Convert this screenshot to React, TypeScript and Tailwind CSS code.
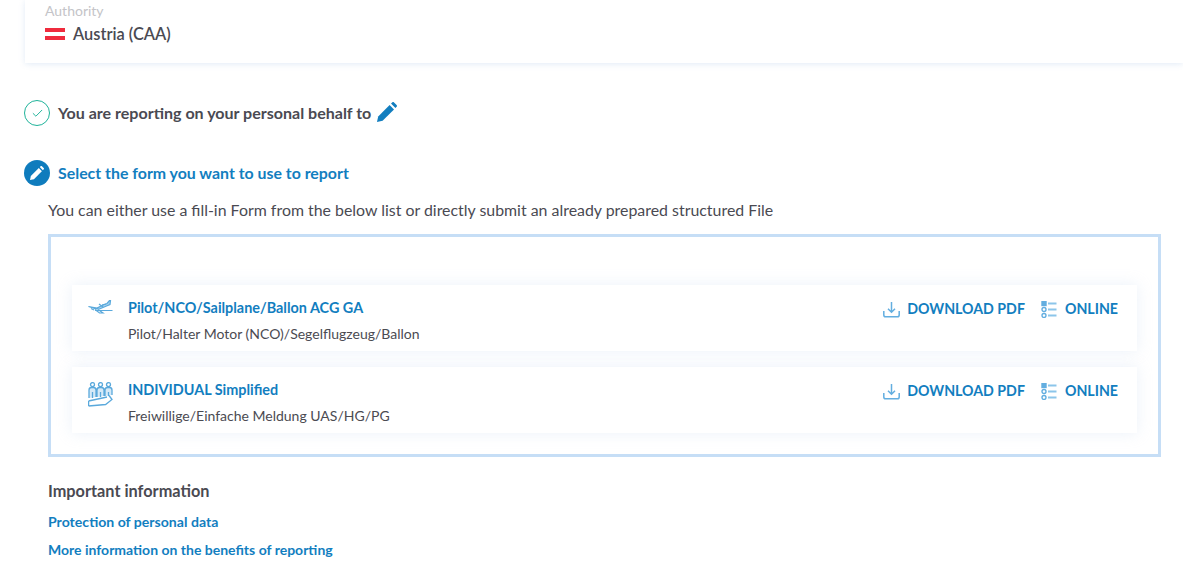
import { Check } from 'lucide-react';
import type { ReactNode } from 'react';

const lato = "font-['Lato',sans-serif]";

function PenSolid({ className }: { className: string }) {
  return (
    <svg className={className} viewBox="0 0 20 20" fill="currentColor">
      <path d="M0 20l1.2-5.6L12.6 3l4.4 4.4L5.6 18.8 0 20z" />
      <path d="M14 1.6L15.2.4c.5-.5 1.3-.5 1.8 0l2.6 2.6c.5.5.5 1.3 0 1.8L18.4 6 14 1.6z" />
    </svg>
  );
}

function PlaneIcon() {
  return (
    <svg className="h-[14px] w-[25px] text-[#5aa9dc]" viewBox="0 0 25 14" fill="none" stroke="currentColor" strokeWidth="1.2">
      <path d="M0.5 6.5l8.5 1.5 6-3 4-1.5 2.5-3h1l-.5 4-3.5 1.5-7 3H8z" fill="#a8d3ef" />
      <path d="M11 4l4 3 M10 9.5l5 3.5h-3.5L7 9.5 M7 10.5h17.5 M14 5l4-1" />
      <path d="M3 8.5l3 1.5" />
    </svg>
  );
}

function PeopleIcon() {
  return (
    <svg className="h-[25px] w-[25px] text-[#5aa9dc]" viewBox="0 0 25 25" fill="none" stroke="currentColor" strokeWidth="1.3">
      <circle cx="4.500" cy="2.600" r="2" />
      <circle cx="12.500" cy="2.600" r="2" />
      <circle cx="20.500" cy="2.600" r="2" />
      <path d="M1 16V8q0-2.500 2.500-2.500h2Q8 5.500 8 8v7 M9 15V8q0-2.500 2.500-2.500h2Q16 5.500 16 8v6 M17 14V8q0-2.500 2.500-2.500h2Q24 5.500 24 8v5" fill="#d5e9f7" />
      <path d="M4.500 10v6 M12.500 10v5 M20.500 10v4" />
      <path d="M.6 19l18.400-4 M.6 24l17-1.500 6.400-5-3-4 M.6 19v5" />
    </svg>
  );
}

function DownloadIcon() {
  return (
    <svg className="h-[17px] w-[17px] text-[#63aee0]" viewBox="0 0 17 17" fill="none" stroke="currentColor" strokeWidth="1.5">
      <path d="M8.500 1v10 M5 7.800l3.500 3.500L12 7.800" />
      <path d="M.8 10v4q0 1.800 1.800 1.800h11.800q1.800 0 1.800-1.800v-4" />
    </svg>
  );
}

function ListIcon() {
  return (
    <svg className="h-[17px] w-[16px] text-[#63aee0]" viewBox="0 0 16 17" fill="none" stroke="currentColor" strokeWidth="1.4">
      <rect x="1" y="0.500" width="4" height="4" fill="currentColor" />
      <circle cx="3" cy="8.500" r="2" />
      <circle cx="3" cy="14.500" r="2" />
      <path d="M7 2.500h8.500 M7 8.500h8.500 M7 14.500h8.500" stroke="#8cc5ea" strokeWidth="1.800" />
    </svg>
  );
}

function FormCard({ icon, title, sub }: { icon: ReactNode; title: string; sub: string }) {
  return (
    <div className="flex h-[66px] bg-white shadow-[0_0_14px_rgba(190,210,235,0.3)]">
      <div className="flex w-[56px] shrink-0 justify-center pt-[15px] pl-[1px]">{icon}</div>
      <div className="flex-1 pt-[14px]">
        <p className="text-[14.4px] leading-[18px] font-bold text-[#127ebf]">{title}</p>
        <p className="mt-[8px] text-[14px] leading-[18px] text-[#4b4b52]">{sub}</p>
      </div>
      <div className="flex items-start gap-[16px] pt-[15px] pr-[19px] text-[14.2px] leading-[18px] font-bold text-[#127ebf]">
        <a className="flex items-center gap-[7px]" href="#"><DownloadIcon />DOWNLOAD PDF</a>
        <a className="flex items-center gap-[8px]" href="#"><ListIcon />ONLINE</a>
      </div>
    </div>
  );
}

export default function App() {
  return (
    <div className={`h-[583px] w-[1183px] overflow-hidden bg-white ${lato} text-[#4a4a52]`}>
      <div className="ml-[25px] h-[63px] bg-white pl-[20px] shadow-[0_1px_6px_rgba(190,210,235,0.45)]">
        <p className="pt-[2px] text-[14px] leading-[17px] text-[#c4c4c8]">Authority</p>
        <div className="mt-[5px] flex items-center gap-[8px]">
          <span className="flex h-[12px] w-[20px] flex-col">
            <span className="h-[4px] bg-[#ef2b3d]" />
            <span className="h-[4px] bg-white" />
            <span className="h-[4px] bg-[#ef2b3d]" />
          </span>
          <span className="text-[16.4px] leading-[20px] font-semibold">Austria (CAA)</span>
        </div>
      </div>

      <div className="mt-[37px] ml-[24px] flex items-center gap-[8px]">
        <span className="flex h-[26px] w-[26px] items-center justify-center rounded-full border-[1.5px] border-[#1fb39a]">
          <Check className="h-[13px] w-[13px] text-[#1fb39a]" strokeWidth={1.8} />
        </span>
        <span className="text-[16.05px] leading-[26px] font-bold">You are reporting on your personal behalf to</span>
        <PenSolid className="-mt-[2px] -ml-[2px] h-[20px] w-[20px] text-[#127ebf]" />
      </div>

      <div className="mt-[34px] ml-[24px] flex items-center gap-[8px]">
        <span className="flex h-[26px] w-[26px] items-center justify-center rounded-full bg-[#0f7cbd]">
          <PenSolid className="h-[14px] w-[14px] text-white" />
        </span>
        <span className="text-[15.9px] leading-[26px] font-bold text-[#127ebf]">Select the form you want to use to report</span>
      </div>

      <p className="mt-[13px] ml-[48px] text-[15.9px] leading-[22px]">
        You can either use a fill-in Form from the below list or directly submit an already prepared structured File
      </p>

      <div className="mt-[13px] ml-[48px] flex h-[223px] w-[1113px] flex-col gap-[16px] border-[3px] border-[#c6def6] px-[21px] pt-[48px]">
        <FormCard icon={<PlaneIcon />} title="Pilot/NCO/Sailplane/Ballon ACG GA" sub="Pilot/Halter Motor (NCO)/Segelflugzeug/Ballon" />
        <FormCard icon={<PeopleIcon />} title="INDIVIDUAL Simplified" sub="Freiwillige/Einfache Meldung UAS/HG/PG" />
      </div>

      <p className="mt-[24px] ml-[48px] text-[16.3px] leading-[20px] font-bold">Important information</p>
      <a className="mt-[12px] ml-[48px] block text-[14.1px] leading-[18px] font-bold text-[#127ebf]" href="#">Protection of personal data</a>
      <a className="mt-[10px] ml-[48px] block text-[14px] leading-[18px] font-bold text-[#127ebf]" href="#">More information on the benefits of reporting</a>
    </div>
  );
}
